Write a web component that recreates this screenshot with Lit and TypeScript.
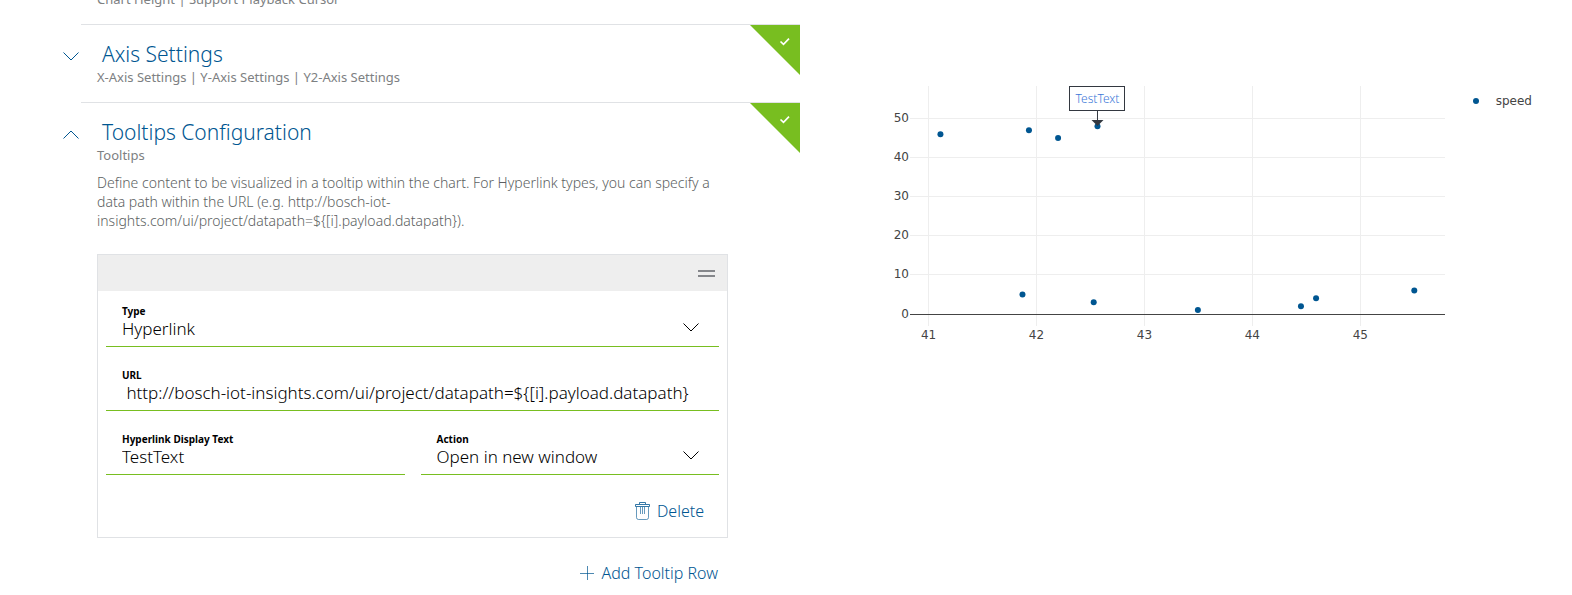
import { LitElement, html, css, svg } from "lit";
import { customElement, property, state } from "lit/decorators.js";

const chevron = (up: boolean) => html`<svg class="chevron" viewBox="0 0 16 9" width="16" height="9" aria-hidden="true">
  <path d=${up ? "M.5 8.5 8 1l7.5 7.5" : "M.5.5 8 8 15.5.5"} fill="none" stroke="currentColor" />
</svg>`;

@customElement("settings-section")
export class SettingsSection extends LitElement {
  @property() heading = "";
  @property() summary = "";
  @property({ type: Boolean, reflect: true }) open = false;

  static styles = css`
    :host {
      display: block;
      position: relative;
      margin-left: 81px;
      border-top: 1px solid #e0e2e5;
    }
    .toggle {
      display: flex;
      align-items: center;
      gap: 23px;
      margin: 15px 0 0 -18px;
      padding: 0;
      border: 0;
      background: none;
      color: #005691;
      font: 300 21px/28px "Noto Sans", sans-serif;
      cursor: pointer;
    }
    .chevron {
      display: block;
      padding-top: 4px;
    }
    h2 {
      margin: 0;
      font: inherit;
    }
    .summary {
      margin: -1px 0 0;
      padding: 0 0 15px 16px;
      color: #7d8082;
      font-size: 13px;
      line-height: 20px;
    }
    .valid {
      position: absolute;
      top: 0;
      right: 0;
      display: block;
    }
    .content {
      padding-left: 16px;
      margin-top: -7px;
    }
  `;

  render() {
    return html`
      <svg class="valid" width="50" height="50" viewBox="0 0 50 50" role="img" aria-label="Valid">
        <path d="M0 0h50v50z" fill="#78be20" />
        <path d="m30.5 16.5 3 2.8 5.5-5.6" fill="none" stroke="#fff" stroke-width="1.7" />
      </svg>
      <button class="toggle" aria-expanded=${this.open} @click=${() => (this.open = !this.open)}>
        ${chevron(this.open)}
        <h2>${this.heading}</h2>
      </button>
      <p class="summary">${this.summary}</p>
      ${this.open ? html`<div class="content"><slot></slot></div>` : ""}
    `;
  }
}

@customElement("tooltip-editor")
export class TooltipEditor extends LitElement {
  static styles = css`
    :host {
      display: block;
      margin-right: 72px;
    }
    * {
      box-sizing: border-box;
    }
    .hint {
      margin: 0 0 24px;
      color: #5c5f62;
      font-size: 14px;
      font-weight: 300;
      line-height: 19px;
    }
    .card {
      border: 1px solid #e0e2e5;
    }
    .handle {
      display: flex;
      justify-content: flex-end;
      align-items: center;
      height: 36px;
      padding-right: 12px;
      background: #eeeeee;
    }
    .fields {
      display: grid;
      grid-template-columns: 1fr 1fr;
      gap: 16px;
      padding: 8px 8px 12px;
    }
    .field {
      display: flex;
      flex-direction: column;
      position: relative;
      height: 48px;
      padding-top: 5px;
      border-bottom: 1px solid #78be20;
    }
    .wide {
      grid-column: 1 / -1;
    }
    label {
      padding-left: 16px;
      font-size: 10px;
      font-weight: 700;
      line-height: 14px;
      color: #000;
    }
    input,
    select {
      width: 100%;
      height: 22px;
      padding: 0 8px 0 16px;
      border: 0;
      outline: 0;
      appearance: none;
      background: none;
      color: #000;
      font: 300 17px/22px "Noto Sans", sans-serif;
    }
    .field .chevron {
      position: absolute;
      right: 20px;
      bottom: 14px;
      pointer-events: none;
    }
    .action {
      display: flex;
      align-items: center;
      height: 48px;
      margin-left: auto;
      padding: 0;
      border: 0;
      background: none;
      color: #005691;
      font: 300 16px/24px "Noto Sans", sans-serif;
      cursor: pointer;
    }
    .delete {
      gap: 7px;
      margin-right: 23px;
      margin-bottom: 2px;
    }
    .add {
      gap: 8px;
      margin-top: 11px;
      margin-right: 10px;
    }
  `;

  render() {
    return html`
      <p class="hint">
        Define content to be visualized in a tooltip within the chart. For Hyperlink types, you can
        specify a data path within the URL (e.g.
        http://bosch-iot-insights.com/ui/project/datapath=\${[i].payload.datapath}).
      </p>
      <div class="card">
        <div class="handle">
          <svg width="17" height="7" viewBox="0 0 17 7" aria-hidden="true">
            <path d="M0 1h17M0 6h17" stroke="#85878b" stroke-width="2" />
          </svg>
        </div>
        <div class="fields">
          <div class="field wide">
            <label for="type">Type</label>
            <select id="type"><option>Hyperlink</option></select>
            ${chevron(false)}
          </div>
          <div class="field wide">
            <label for="url">URL</label>
            <input id="url" .value=${" http://bosch-iot-insights.com/ui/project/datapath=${[i].payload.datapath}"} />
          </div>
          <div class="field">
            <label for="text">Hyperlink Display Text</label>
            <input id="text" .value=${"TestText"} />
          </div>
          <div class="field">
            <label for="action">Action</label>
            <select id="action"><option>Open in new window</option></select>
            ${chevron(false)}
          </div>
        </div>
        <button class="action delete">
          <svg width="15" height="18" viewBox="0 0 15 18" fill="none" stroke="currentColor" aria-hidden="true">
            <path d="M4.5 2V.5h6V2" stroke-width=".8" />
            <path d="M.5 4.5v-2h14v2z" stroke-width=".8" />
            <path d="M1.5 5v10.5q0 2 2 2h8q2 0 2-2V5M5.5 5v7M7.500 5v7M9.500 5v7" stroke-width=".6" />
          </svg>
          Delete
        </button>
      </div>
      <button class="action add">
        <svg width="14" height="14" viewBox="0 0 14 14" aria-hidden="true">
          <path d="M7.500 0v14M0 7.500h14" stroke="currentColor" stroke-width=".7" />
        </svg>
        Add Tooltip Row
      </button>
    `;
  }
}

interface Point {
  x: number;
  y: number;
}

@customElement("scatter-chart")
export class ScatterChart extends LitElement {
  @state() private points: Point[] = [
    { x: 41.11, y: 46 },
    { x: 41.93, y: 47 },
    { x: 42.2, y: 45 },
    { x: 42.565, y: 48 },
    { x: 41.87, y: 5 },
    { x: 42.53, y: 3 },
    { x: 43.495, y: 1 },
    { x: 44.45, y: 2 },
    { x: 44.59, y: 4 },
    { x: 45.5, y: 6 },
  ];

  static styles = css`
    :host {
      display: flex;
      padding: 86px 40px 0 110px;
      color: #444;
      font: 12px/18px "DejaVu Sans", Verdana, sans-serif;
    }
    .plot {
      flex: 1;
      min-width: 0;
      height: 256px;
      overflow: visible;
    }
    text {
      fill: #444;
    }
    .grid {
      stroke: #eee;
      shape-rendering: crispEdges;
    }
    .zero {
      stroke: #444;
      shape-rendering: crispEdges;
    }
    .dot {
      fill: #005691;
    }
    .note text {
      fill: #3c78d8;
      font: 300 12px "Noto Sans", sans-serif;
    }
    .legend {
      display: flex;
      align-items: center;
      align-self: flex-start;
      gap: 17px;
      margin-left: 28px;
      padding-top: 6px;
    }
  `;

  private px = (x: number) => `${((x - 40.828) / 4.954) * 100}%`;
  private py = (y: number) => 228 - y * 3.91;

  render() {
    return html`
      <svg class="plot" role="img" aria-label="speed">
        ${[41, 42, 43, 44, 45].map(
          (v) => svg`<line class="grid" x1=${this.px(v)} x2=${this.px(v)} y1="0" y2="240" />
            <text x=${this.px(v)} y="253" text-anchor="middle">${v}</text>`,
        )}
        ${[0, 10, 20, 30, 40, 50].map(
          (v) => svg`<line class=${v ? "grid" : "zero"} x1="0" x2="100%" y1=${Math.floor(this.py(v)) + 0.5} y2=${Math.floor(this.py(v)) + 0.5} />
            <text x="-1" y=${Math.floor(this.py(v)) + 4} text-anchor="end">${v}</text>`,
        )}
        ${this.points.map((p) => svg`<circle class="dot" cx=${this.px(p.x)} cy=${this.py(p.y)} r="3" />`)}
        <svg class="note" x=${this.px(42.565)} y="0" overflow="visible">
          <path d="M0 25v12" stroke="#333840" />
          <path d="M-6 34H6L0 40z" fill="#333840" />
          <rect x="-28" y=".5" width="55" height="24" fill="#fff" stroke="#333840" shape-rendering="crispEdges" />
          <a href="http://bosch-iot-insights.com/ui/project/"><text y="17" text-anchor="middle">TestText</text></a>
        </svg>
      </svg>
      <div class="legend">
        <svg width="6" height="6"><circle class="dot" cx="3" cy="3" r="3" /></svg>
        <span>speed</span>
      </div>
    `;
  }
}

@customElement("app-root")
export class AppRoot extends LitElement {
  static styles = css`
    :host {
      display: grid;
      grid-template-columns: minmax(0, 800fr) minmax(0, 772fr);
      overflow: hidden;
      background: #fff;
      font-family: "Noto Sans", sans-serif;
    }
    .previous {
      margin: -11px 0 0 97px;
      padding-bottom: 15px;
      color: #7d8082;
      font-size: 13px;
      line-height: 20px;
    }
  `;

  render() {
    return html`
      <main>
        <p class="previous">Chart Height | Support Playback Cursor</p>
        <settings-section
          heading="Axis Settings"
          summary="X-Axis Settings | Y-Axis Settings | Y2-Axis Settings"
        ></settings-section>
        <settings-section heading="Tooltips Configuration" summary="Tooltips" open>
          <tooltip-editor></tooltip-editor>
        </settings-section>
      </main>
      <scatter-chart></scatter-chart>
    `;
  }
}
